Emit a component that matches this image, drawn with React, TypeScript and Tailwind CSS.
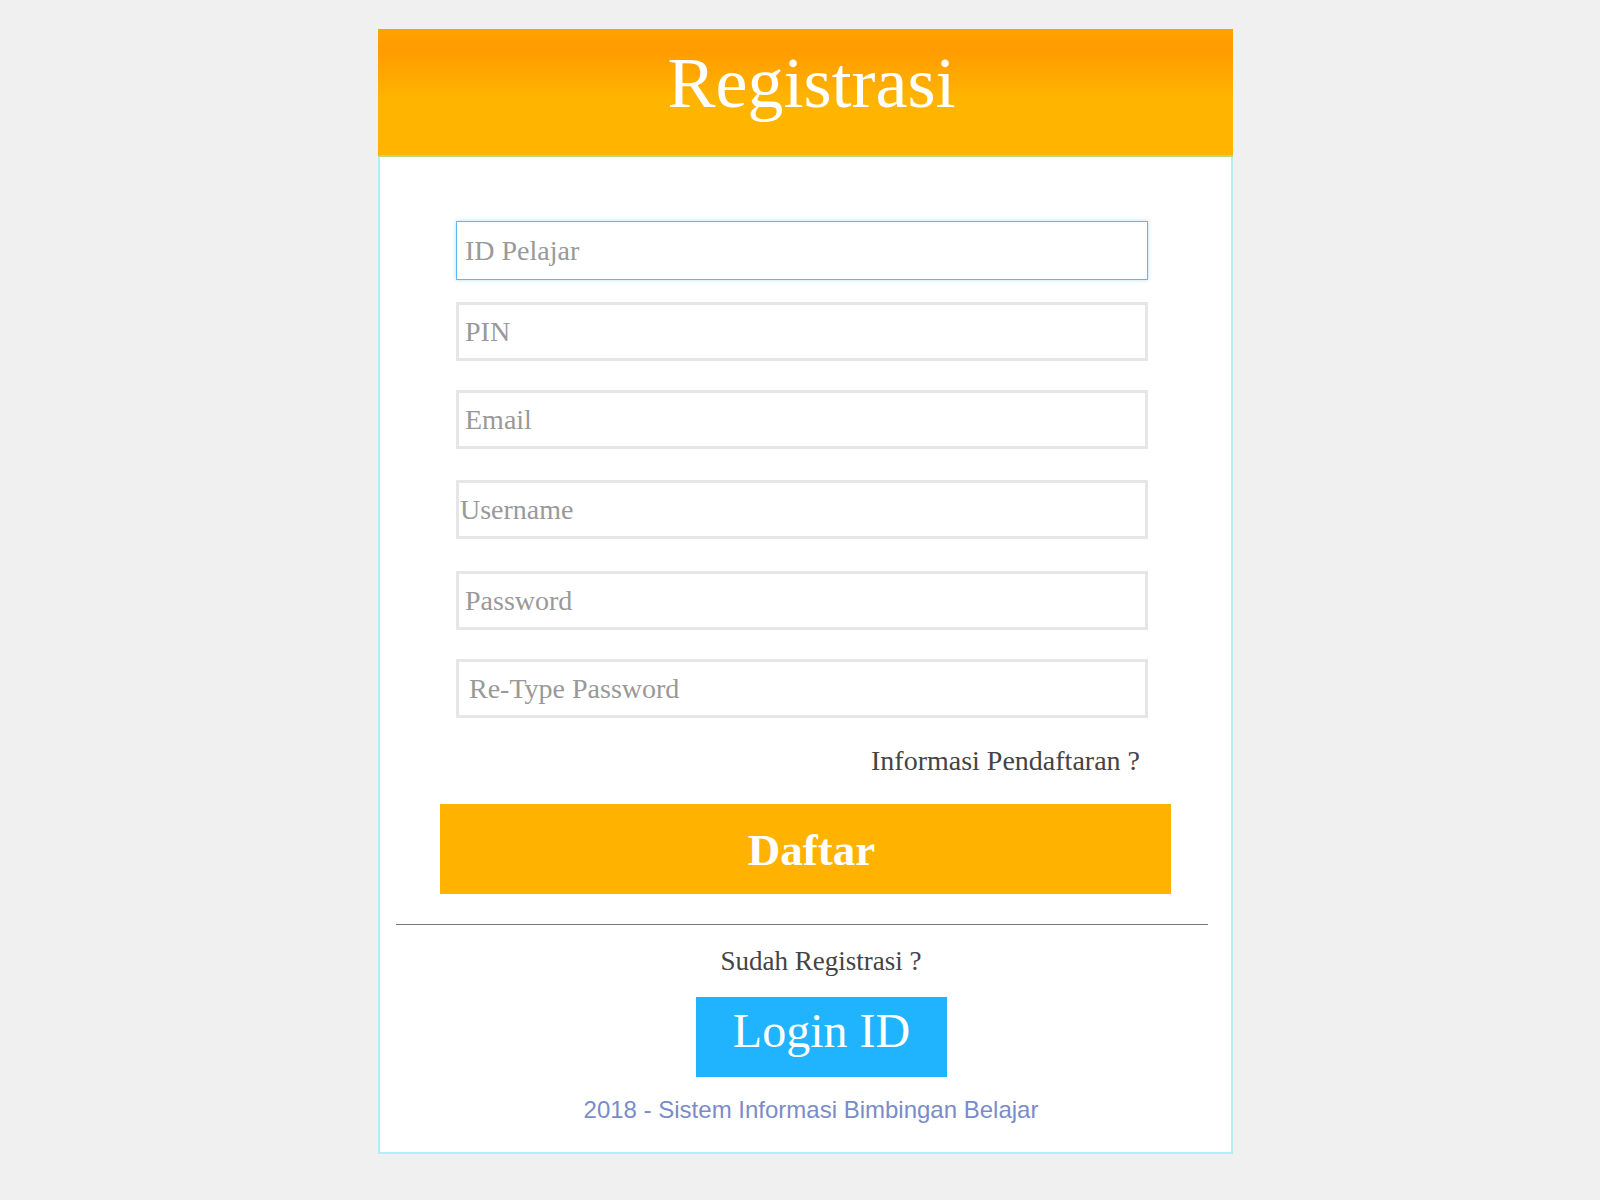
import React from "react";

const serif = "font-['Liberation_Serif',serif]";

const fields = [
  { ph: "ID Pelajar", cls: "h-[59px] border border-[#5bb8f0] shadow-[0_0_4px_rgba(91,184,240,0.45)] pl-[8px]" },
  { ph: "PIN", cls: "mt-[22px] h-[59px] border-[3px] border-[#e6e6e6] pl-[6px]" },
  { ph: "Email", cls: "mt-[29px] h-[59px] border-[3px] border-[#e6e6e6] pl-[6px]" },
  { ph: "Username", cls: "mt-[31px] h-[59px] border-[3px] border-[#e6e6e6] pl-[1px]" },
  { ph: "Password", cls: "mt-[32px] h-[59px] border-[3px] border-[#e6e6e6] pl-[6px]" },
  { ph: "Re-Type Password", cls: "mt-[29px] h-[59px] border-[3px] border-[#e6e6e6] pl-[10px]" },
];

export default function App() {
  return (
    <div className="min-h-[1200px] bg-[#f0f0f0] pt-[29px]">
      <div className="ml-[378px] w-[855px]">
        {/* header */}
        <div className="h-[128px] border-b-2 border-[#b7d77a] bg-[linear-gradient(180deg,#ffa200_0%,#ff9c00_18%,#ffb400_55%,#ffb500_100%)] pt-[18px] pl-[12px] text-center">
          <h1 className={`${serif} text-[72px] leading-none text-white`}>Registrasi</h1>
        </div>

        {/* form body */}
        <div className="border-2 border-t-0 border-[#b0eff5] bg-white pt-[64px] pb-[28px]">
          {fields.map((f, i) => (
            <input
              key={i}
              type="text"
              placeholder={f.ph}
              className={`${f.cls} ${serif} ml-[76px] block w-[692px] bg-white text-[28px] text-[#555] outline-none placeholder:text-[#999]`}
            />
          ))}

          <p className={`${serif} mt-[25px] mr-[91px] text-right text-[28px] leading-[36px] text-[#444]`}>
            Informasi Pendaftaran ?
          </p>

          <button className={`${serif} mt-[25px] ml-[60px] flex h-[90px] w-[731px] items-center justify-center bg-[#ffb300] pt-[4px] pl-[12px] text-[45px] font-bold text-white`}>
            Daftar
          </button>

          <div className="mt-[30px] ml-[16px] h-px w-[812px] bg-[#777]" />

          <p className={`${serif} mt-[19px] pl-[31px] text-center text-[27px] leading-[34px] text-[#444]`}>
            Sudah Registrasi ?
          </p>

          <div className="mt-[19px] flex justify-center pl-[32px]">
            <button className={`${serif} flex h-[80px] w-[251px] items-center justify-center bg-[#20b4ff] pb-[12px] text-[48px] text-white`}>
              Login ID
            </button>
          </div>

          <p className="mt-[19px] pl-[11px] text-center font-['Liberation_Sans',Arial,sans-serif] text-[24px] leading-[28px] text-[#7a8cc8]">
            2018 - Sistem Informasi Bimbingan Belajar
          </p>
        </div>
      </div>
    </div>
  );
}
